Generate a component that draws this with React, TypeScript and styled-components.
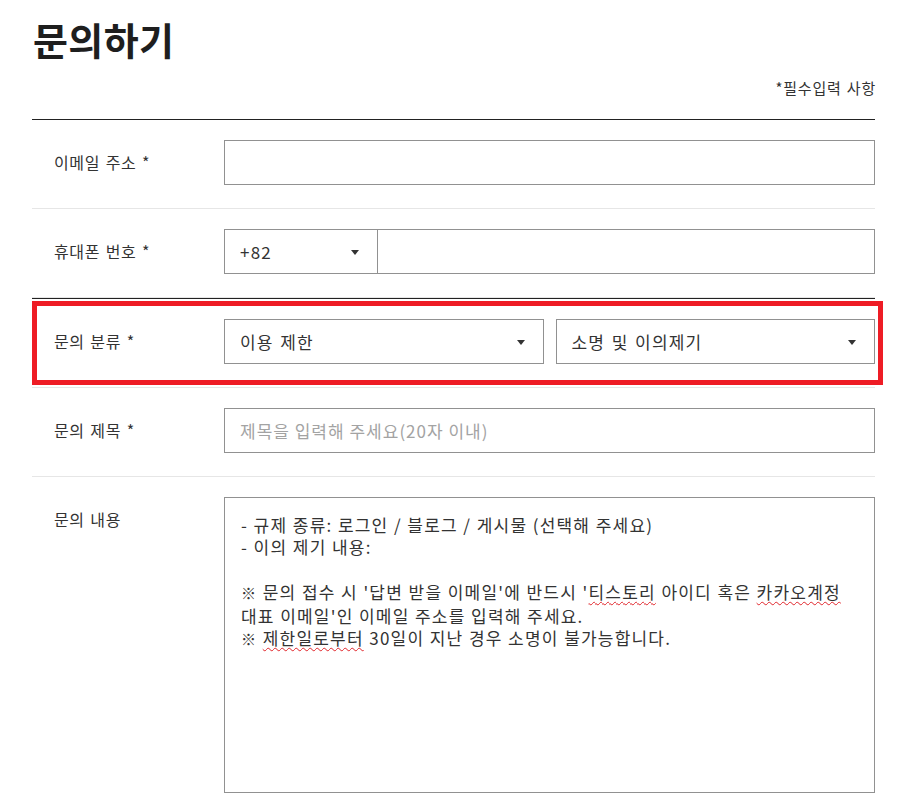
import styled, { createGlobalStyle } from "styled-components";

const GlobalStyle = createGlobalStyle`
  body {
    margin: 0;
    background: #fff;
    font-family: "Noto Sans CJK KR", "Noto Sans", sans-serif;
    color: #333;
  }
`;

const Page = styled.div`
  width: 843px;
  margin-left: 32px;
`;

const Header = styled.div`
  padding: 20px 0 21px;
  border-bottom: 1px solid #222;
`;

const Title = styled.h1`
  margin: 0 0 0 1px;
  font-size: 38px;
  line-height: 38px;
  letter-spacing: 0.4px;
  font-weight: 700;
  color: #1e1e1e;
`;

const Required = styled.p`
  margin: 20px -1px 0 0;
  text-align: right;
  font-size: 15px;
  line-height: 20px;
  letter-spacing: 0.8px;
  word-spacing: 1px;
  color: #333;
`;

const Row = styled.div<{ $strong?: boolean; $top?: boolean; $marked?: boolean }>`
  position: relative;
  display: grid;
  grid-template-columns: 192px 1fr;
  align-items: ${(p) => (p.$top ? "start" : "center")};
  padding: 20px 0 23px;
  border-bottom: 1px solid #e6e6e6;
  box-shadow: ${(p) => (p.$strong ? "0 1px 0 #222" : "none")};
  margin-bottom: ${(p) => (p.$strong ? "1px" : "0")};

  &::after {
    content: "";
    display: ${(p) => (p.$marked ? "block" : "none")};
    position: absolute;
    top: 2px;
    left: 0;
    right: -8px;
    bottom: 2px;
    border: 5px solid #ee1c25;
    pointer-events: none;
  }
`;

const Label = styled.label`
  padding-left: 22px;
  font-size: 16px;
  line-height: 45px;
  letter-spacing: 0.6px;
  word-spacing: 1.5px;
  color: #333;
`;

const Fields = styled.div<{ $split?: boolean }>`
  display: flex;
  gap: ${(p) => (p.$split ? "12px" : "0")};
`;

const TextInput = styled.input`
  box-sizing: border-box;
  flex: 1;
  min-width: 0;
  height: 45px;
  margin: 0;
  padding: 0 15px;
  border: 1px solid #919191;
  border-radius: 0;
  font-family: inherit;
  font-size: 17px;
  letter-spacing: 1px;
  color: #333;
  outline: none;

  &::placeholder {
    color: #a3a3a3;
  }
`;

const Select = styled.div<{ $width?: number }>`
  position: relative;
  box-sizing: border-box;
  display: flex;
  align-items: center;
  flex: ${(p) => (p.$width ? `0 0 ${p.$width}px` : "1")};
  height: 45px;
  padding: 0 15px;
  border: 1px solid #919191;
  border-right-width: ${(p) => (p.$width ? "0" : "1px")};
  font-size: 17px;
  letter-spacing: 1.2px;
  word-spacing: 1.5px;
  color: #333;

  &::after {
    content: "";
    position: absolute;
    right: 18px;
    top: 50%;
    margin-top: -2px;
    border-left: 4px solid transparent;
    border-right: 4px solid transparent;
    border-top: 5px solid #333;
  }
`;

const TextArea = styled.div`
  box-sizing: border-box;
  flex: 1;
  height: 296px;
  padding: 16px;
  border: 1px solid #919191;
  font-size: 17px;
  line-height: 22.4px;
  letter-spacing: 1.2px;
  word-spacing: 0.5px;
  color: #333;
  white-space: nowrap;
`;

const Line = styled.div`
  min-height: 22.4px;
`;

const Mark = styled.span`
  font-size: 15px;
`;

const Typo = styled.span`
  text-decoration: underline wavy #e0242a;
  text-decoration-thickness: 1px;
  text-underline-offset: 2px;
`;

export default function App() {
  return (
    <Page>
      <GlobalStyle />
      <Header>
        <Title>문의하기</Title>
        <Required>*필수입력 사항</Required>
      </Header>

      <Row>
        <Label>이메일 주소 *</Label>
        <Fields>
          <TextInput type="text" />
        </Fields>
      </Row>

      <Row $strong>
        <Label>휴대폰 번호 *</Label>
        <Fields>
          <Select $width={153}>+82</Select>
          <TextInput type="text" />
        </Fields>
      </Row>

      <Row $marked>
        <Label>문의 분류 *</Label>
        <Fields $split>
          <Select>이용 제한</Select>
          <Select>소명 및 이의제기</Select>
        </Fields>
      </Row>

      <Row>
        <Label>문의 제목 *</Label>
        <Fields>
          <TextInput type="text" placeholder="제목을 입력해 주세요(20자 이내)" />
        </Fields>
      </Row>

      <Row $top>
        <Label>문의 내용</Label>
        <Fields>
          <TextArea>
            <Line>- 규제 종류: 로그인 / 블로그 / 게시물 (선택해 주세요)</Line>
            <Line>- 이의 제기 내용:</Line>
            <Line />
            <Line>
              <Mark>※</Mark> 문의 접수 시 '답변 받을 이메일'에 반드시 '<Typo>티스토리</Typo> 아이디
              혹은 <Typo>카카오계정</Typo>
            </Line>
            <Line>대표 이메일'인 이메일 주소를 입력해 주세요.</Line>
            <Line>
              <Mark>※</Mark> <Typo>제한일로부터</Typo> 30일이 지난 경우 소명이 불가능합니다.
            </Line>
          </TextArea>
        </Fields>
      </Row>
    </Page>
  );
}
